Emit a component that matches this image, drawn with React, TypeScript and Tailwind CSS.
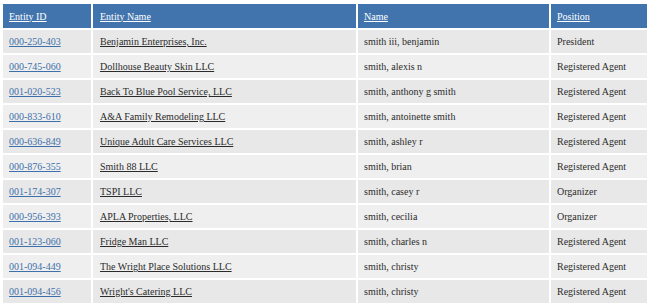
const rows = [
  ["000-250-403", "Benjamin Enterprises, Inc.", "smith iii, benjamin", "President"],
  ["000-745-060", "Dollhouse Beauty Skin LLC", "smith, alexis n", "Registered Agent"],
  ["001-020-523", "Back To Blue Pool Service, LLC", "smith, anthony g smith", "Registered Agent"],
  ["000-833-610", "A&A Family Remodeling LLC", "smith, antoinette smith", "Registered Agent"],
  ["000-636-849", "Unique Adult Care Services LLC", "smith, ashley r", "Registered Agent"],
  ["000-876-355", "Smith 88 LLC", "smith, brian", "Registered Agent"],
  ["001-174-307", "TSPI LLC", "smith, casey r", "Organizer"],
  ["000-956-393", "APLA Properties, LLC", "smith, cecilia", "Organizer"],
  ["001-123-060", "Fridge Man LLC", "smith, charles n", "Registered Agent"],
  ["001-094-449", "The Wright Place Solutions LLC", "smith, christy", "Registered Agent"],
  ["001-094-456", "Wright's Catering LLC", "smith, christy", "Registered Agent"],
];

export default function App() {
  return (
    <div className="bg-white w-[650px] h-[307px] overflow-hidden pt-[2px] pl-[1px]">
      <table className="w-[648px] border-collapse font-['Liberation_Serif',serif] text-[10px] text-[#2b2b2b]">
        <thead>
          <tr className="bg-[#4174ad] h-[26px]">
            <th className="w-[90px] border-2 border-white text-left font-normal pl-[6px]">
              <a href="#" className="text-white underline">Entity ID</a>
            </th>
            <th className="w-[265px] border-2 border-white text-left font-normal pl-[7px]">
              <a href="#" className="text-white underline">Entity Name</a>
            </th>
            <th className="w-[193px] border-2 border-white text-left font-normal pl-[6px]">
              <a href="#" className="text-white underline">Name</a>
            </th>
            <th className="border-2 border-white text-left font-normal pl-[6px]">
              <a href="#" className="text-white underline">Position</a>
            </th>
          </tr>
        </thead>
        <tbody>
          {rows.map((r, i) => (
            <tr key={r[0] + i} className={`h-[25px] ${i % 2 === 0 ? "bg-[#e8e8e8]" : "bg-[#efefef]"}`}>
              <td className="border-2 border-white pl-[6px]">
                <a href="#" className="text-[#3d70aa] underline">{r[0]}</a>
              </td>
              <td className="border-2 border-white pl-[7px]">
                <a href="#" className="text-[#2b2b2b] underline">{r[1]}</a>
              </td>
              <td className="border-2 border-white pl-[6px]">{r[2]}</td>
              <td className="border-2 border-white pl-[6px]">{r[3]}</td>
            </tr>
          ))}
        </tbody>
      </table>
    </div>
  );
}
